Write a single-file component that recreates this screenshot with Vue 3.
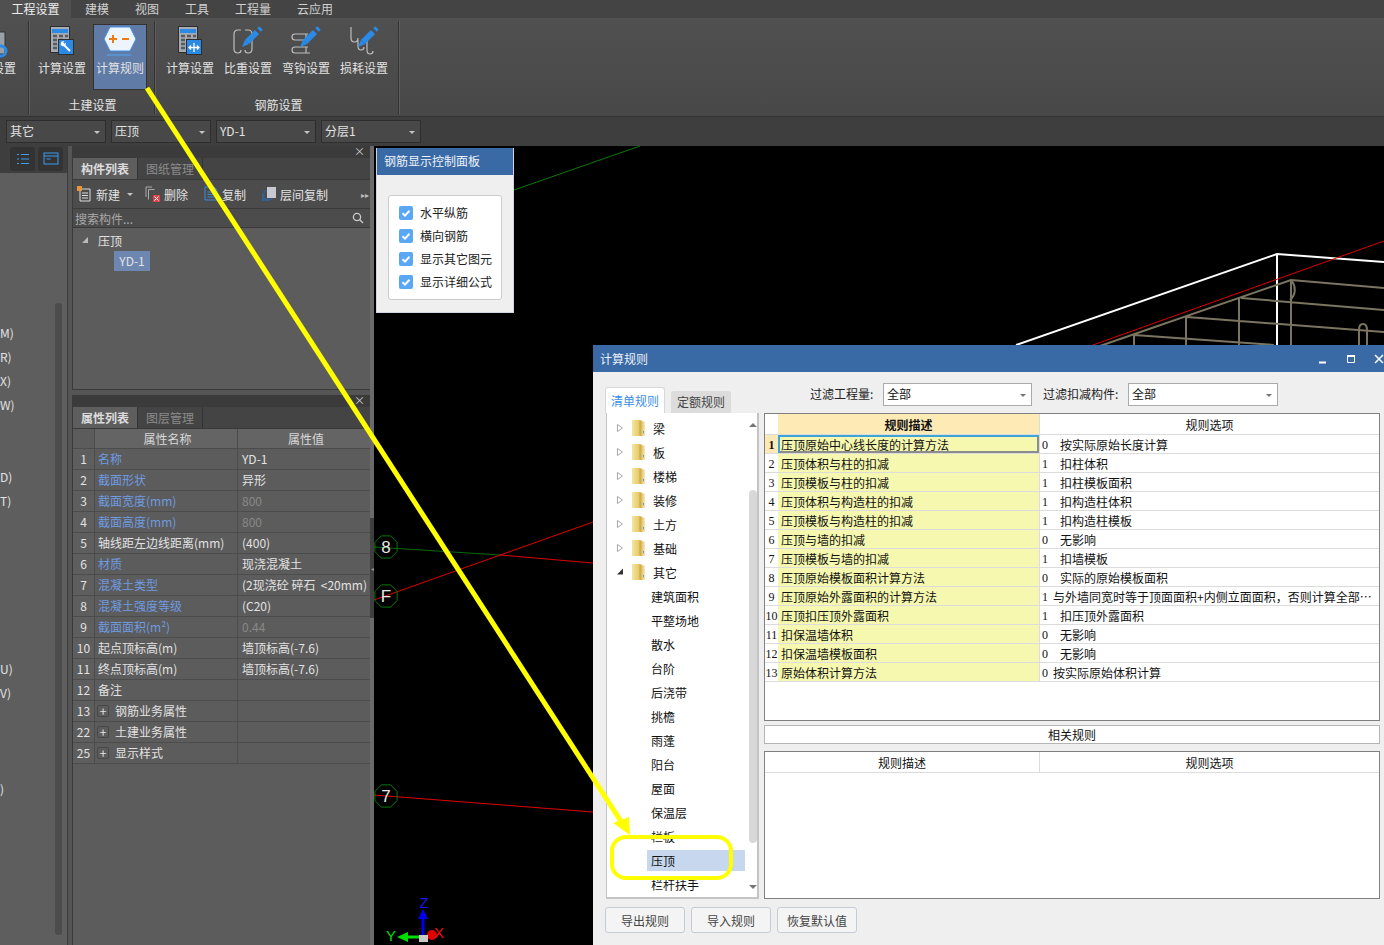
<template>
  <div class="app">
    <div class="menubar">
      <div v-for="(m, i) in menus" :key="m.t" class="menu" :class="{ on: i === 0 }" :style="{ width: m.w + 'px' }">{{ m.t }}</div>
    </div>

    <div class="ribbon">
      <div class="rgroup first">
        <svg class="cut-icon" width="10" height="34" viewBox="0 0 10 34">
          <rect x="-12" y="5" width="17" height="22" fill="#9aa0a8" stroke="#333" />
          <circle cx="1" cy="24" r="5" fill="none" stroke="#2a8ae6" stroke-width="3" />
        </svg>
        <div class="cut-text">设置</div>
      </div>
      <div class="rgroup g1">
        <div class="rbtns">
          <div v-for="b in civilBtns" :key="b.t" class="rbtn" :class="{ sel: b.sel }">
            <svg width="40" height="32" viewBox="0 0 40 32" v-html="icons[b.icon]"></svg>
            <span>{{ b.t }}</span>
          </div>
        </div>
        <div class="rlabel">土建设置</div>
      </div>
      <div class="rgroup g2">
        <div class="rbtns">
          <div v-for="b in rebarBtns" :key="b.t" class="rbtn">
            <svg width="40" height="32" viewBox="0 0 40 32" v-html="icons[b.icon]"></svg>
            <span>{{ b.t }}</span>
          </div>
        </div>
        <div class="rlabel">钢筋设置</div>
      </div>
    </div>

    <div class="selbar">
      <div v-for="s in selectors" :key="s" class="dsel">{{ s }}<i class="caret"></i></div>
    </div>

    <div class="main">
      <div class="rail">
        <div class="rail-top">
          <div class="rail-icon">
            <svg width="14" height="14" viewBox="0 0 14 14" fill="none" stroke="#3d9bf0">
              <path d="M1 2.5h2M1 7h2M1 11.5h2M5 2.5h8M5 7h8M5 11.5h8" />
            </svg>
          </div>
          <div class="rail-icon">
            <svg width="16" height="14" viewBox="0 0 16 14" fill="none" stroke="#3d9bf0">
              <rect x="1" y="1" width="14" height="11" /><path d="M1 4h14M3.5 7h4" />
            </svg>
          </div>
        </div>
        <div class="rail-body">
          <div class="rail-list">
            <div v-for="(t, i) in railRows" :key="i" class="rail-row"><span>{{ t }}</span></div>
          </div>
          <div class="rail-scroll"></div>
        </div>
      </div>

      <div class="panels">
        <section class="panel p1">
          <div class="pstrip">×</div>
          <div class="ptabs">
            <div class="ptab on">构件列表</div>
            <div class="ptab">图纸管理</div>
          </div>
          <div class="tools">
            <div class="tool t-new">
              <svg width="15" height="16" viewBox="0 0 15 16" fill="none" stroke="#ddd">
                <path d="M3 3h10v12H3zM5 7h6M5 9.500h6M5 12h6" /><rect x="0" y="0" width="5" height="5" fill="#e8963a" stroke="none" />
              </svg>
              新建<i class="caret small"></i>
            </div>
            <div class="tool t-del">
              <svg width="15" height="16" viewBox="0 0 15 16" fill="none" stroke="#aaa">
                <path d="M3.500 3.500h6M3.500 3.500v10M1 1h6M1 1v10" /><rect x="8" y="9" width="7" height="7" fill="#d9454a" stroke="none" /><path d="M9.500 10.500l4 4M13.500 10.500l-4 4" stroke="#fff" />
              </svg>
              删除
            </div>
            <div class="tool t-copy">
              <svg width="15" height="16" viewBox="0 0 15 16" fill="none" stroke="#3d86d8">
                <path d="M1 1h9l3 3v10H1zM3.500 6h7M3.500 8.500h7M3.500 11h7" />
              </svg>
              复制
            </div>
            <div class="tool t-floor">
              <svg width="15" height="16" viewBox="0 0 15 16">
                <rect x="0" y="7" width="8" height="8" fill="#35608f" /><rect x="2" y="5" width="8" height="8" fill="#4c4c4c" stroke="#35608f" /><rect x="5" y="1" width="9" height="11" fill="#c9c9d2" />
              </svg>
              层间复制
            </div>
            <div class="more">▸▸</div>
          </div>
          <div class="search">
            <span>搜索构件...</span>
            <svg width="12" height="12" viewBox="0 0 12 12" fill="none" stroke="#ccc" stroke-width="1.300">
              <circle cx="5" cy="5" r="3.600" /><path d="M7.800 7.800L11 11" />
            </svg>
          </div>
          <div class="ctree">
            <div class="cnode"><i class="tri"></i>压顶</div>
            <div class="cleaf">YD-1</div>
          </div>
        </section>

        <section class="panel p2">
          <div class="pstrip">×</div>
          <div class="ptabs">
            <div class="ptab on">属性列表</div>
            <div class="ptab">图层管理</div>
          </div>
          <div class="prow phead">
            <div class="pidx"></div>
            <div class="pname">属性名称</div>
            <div class="pval">属性值</div>
          </div>
          <div v-for="p in props" :key="p.n" class="prow">
            <div class="pidx">{{ p.n }}</div>
            <div class="pname" :class="{ link: p.link }">
              <b v-if="p.group" class="plus">+</b>{{ p.name }}
            </div>
            <div class="pval" :class="{ dim: p.dim }">{{ p.val }}</div>
          </div>
        </section>
      </div>

      <div class="splitter"><div class="grip">◂</div></div>

      <div class="canvas">
        <svg class="scene" width="1010" height="799" viewBox="374 146 1010 799" fill="none">
          <path d="M514 190L640 146" stroke="#0a7a0a" />
          <path d="M374 547L500 555" stroke="#0a6a0a" />
          <path d="M500 555L593 563M374 600L593 522M374 795L593 812" stroke="#e00000" />
          <path d="M1016 345L1277 254L1384 262M1277 254V345" stroke="#fff" stroke-width="2" />
          <path d="M1093 345L1384 241" stroke="#e00000" />
          <path d="M1097 347L1291 280L1384 288M1241 298L1384 310M1187 317L1384 332M1134 335L1274 345M1239 298V345M1186 317V345M1134 335V345M1291 280V345" stroke="#7a7460" stroke-width="2" />
          <path d="M1292 281c4 6 4 14-2 19M1359 345v-15c0-8 8-8 8 0v15" stroke="#7a7460" stroke-width="2" />
          <g v-for="a in axes" :key="a.t">
            <polygon :points="octagon(386, a.y)" stroke="#0a7a0a" />
            <text x="386" :y="a.y + 6" text-anchor="middle" class="axis-t">{{ a.t }}</text>
          </g>
          <path d="M423 935V918" stroke="#0000f0" stroke-width="3" />
          <polygon points="423,909 418,919 428,919" fill="#0000f0" />
          <path d="M419 937H407" stroke="#00e000" stroke-width="3" />
          <polygon points="397,937 408,932 408,942" fill="#00e000" />
          <circle cx="432" cy="935" r="5" fill="#e00000" />
          <rect x="419" y="935" width="9" height="7" fill="#c9c9c9" />
          <text x="424" y="908" text-anchor="middle" class="gizmo" fill="#1616f0">Z</text>
          <text x="391" y="941" text-anchor="middle" class="gizmo" fill="#00e000">Y</text>
          <text x="439" y="938" text-anchor="middle" class="gizmo" fill="#f01010">X</text>
        </svg>

        <div class="ctl">
          <div class="ctl-title">钢筋显示控制面板</div>
          <div class="ctl-body">
            <div class="ctl-box">
              <label v-for="c in checks" :key="c" class="chk">
                <svg width="14" height="14" viewBox="0 0 14 14">
                  <rect width="14" height="14" rx="2" fill="#5aa7f5" />
                  <path d="M3.500 7.200l2.500 2.400 4.500-4.800" fill="none" stroke="#fff" stroke-width="2" />
                </svg>
                <span>{{ c }}</span>
              </label>
            </div>
          </div>
        </div>

        <div class="dlg">
          <div class="dlg-title">
            <span>计算规则</span>
            <div class="winbtns">
              <svg width="10" height="10" viewBox="0 0 10 10"><path d="M1 8.500h7" stroke="#fff" stroke-width="2" /></svg>
              <svg width="10" height="10" viewBox="0 0 10 10" fill="none"><path d="M1.500 2.500h7v6h-7z" stroke="#fff" /><path d="M1 2h8" stroke="#fff" stroke-width="2" /></svg>
              <svg width="10" height="10" viewBox="0 0 10 10"><path d="M1 1l8 8M9 1l-8 8" stroke="#fff" stroke-width="1.500" /></svg>
            </div>
          </div>
          <div class="dlg-body">
            <div class="filters">
              <div class="dtabs">
                <div class="dtab on">清单规则</div>
                <div class="dtab">定额规则</div>
              </div>
              <div class="flabel l1">过滤工程量:</div>
              <div class="fsel s1">全部<i class="caret gray"></i></div>
              <div class="flabel l2">过滤扣减构件:</div>
              <div class="fsel s2">全部<i class="caret gray"></i></div>
            </div>

            <div class="content">
              <div class="tree">
                <div class="tree-list">
                  <div v-for="n in treeRoots" :key="n.t" class="tnode">
                    <svg class="ttri" width="6" height="8" viewBox="0 0 6 8">
                      <polygon v-if="!n.open" points="0.500,0.500 5.500,4 0.500,7.500" fill="#fff" stroke="#a8a8a8" />
                      <polygon v-else points="0,6.500 6,6.500 6,0.500" fill="#333" />
                    </svg>
                    <svg width="13" height="16" viewBox="0 0 13 16">
                      <defs>
                        <linearGradient id="fold" x1="0" y1="0" x2="1" y2="0">
                          <stop offset="0" stop-color="#f3e5a6" /><stop offset="0.550" stop-color="#e8c964" /><stop offset="0.650" stop-color="#d8b24a" /><stop offset="1" stop-color="#f6ecc0" />
                        </linearGradient>
                      </defs>
                      <path d="M0 0h8l5 2v14H0z" fill="url(#fold)" />
                      <path d="M8 1v14" stroke="#c9a94e" />
                      <path d="M11.500 11v2" stroke="#4f9bd8" />
                    </svg>
                    <span>{{ n.t }}</span>
                  </div>
                  <div v-for="t in treeLeaves" :key="t" class="tleaf" :class="{ sel: t === '压顶' }">
                    <span>{{ t }}</span>
                  </div>
                </div>
                <div class="tscroll">
                  <i class="up"></i>
                  <div class="thumb"></div>
                  <i class="down"></i>
                </div>
              </div>

              <div class="rcol">
                <div class="grid g-main">
                  <div class="grow ghead">
                    <div class="gi"></div>
                    <div class="gd head-d">规则描述</div>
                    <div class="go head-o">规则选项</div>
                  </div>
                  <div v-for="(r, i) in rules" :key="i" class="grow" :class="{ cur: i === 0 }">
                    <div class="gi">{{ i + 1 }}</div>
                    <div class="gd">{{ r.d }}</div>
                    <div class="go">
                      <span class="code">{{ r.c }}</span>
                      <span class="otext" :class="{ tight: r.tight }">{{ r.o }}</span>
                    </div>
                  </div>
                </div>
                <div class="related">相关规则</div>
                <div class="grid g-sub">
                  <div class="grow ghead">
                    <div class="gd2">规则描述</div>
                    <div class="go head-o">规则选项</div>
                  </div>
                </div>
              </div>
            </div>

            <div class="actions">
              <button v-for="a in actions" :key="a" class="act">{{ a }}</button>
            </div>
          </div>
        </div>
      </div>

      <svg class="mark" width="1384" height="945" viewBox="0 0 1384 945" fill="none">
        <path d="M147 88L624 826" stroke="#ffff00" stroke-width="5" />
        <polygon points="613,823 629,817 630,835" fill="#ffff00" />
        <rect x="612" y="837" width="119" height="41" rx="14" stroke="#ffff00" stroke-width="4" />
      </svg>
    </div>
  </div>
</template>

<script setup>
const menus = [
  { t: '工程设置', w: 71 },
  { t: '建模', w: 50 },
  { t: '视图', w: 50 },
  { t: '工具', w: 50 },
  { t: '工程量', w: 62 },
  { t: '云应用', w: 62 }
];

const civilBtns = [
  { t: '计算设置', icon: 'calcWrench' },
  { t: '计算规则', icon: 'hex', sel: true }
];
const rebarBtns = [
  { t: '计算设置', icon: 'calcAnchor' },
  { t: '比重设置', icon: 'hooks' },
  { t: '弯钩设置', icon: 'bend' },
  { t: '损耗设置', icon: 'loss' }
];

const calcBody = `
  <rect x="8.500" y="1.500" width="19" height="26" fill="#a7abb3" stroke="#2e2e2e"/>
  <rect x="10" y="4" width="16" height="4" fill="#2a8ae6"/>
  <path d="M11 11h4M17 11h4M23 11h3M11 15h4M17 15h4M11 19h4M11 23h4" stroke="#5a5a5a" stroke-width="2.500"/>
  <rect x="16.500" y="14.500" width="15" height="15" fill="#2a8ae6" stroke="#2e2e2e"/>`;
const pencil = `
  <path d="M19 17L29 7" stroke="#2a8ae6" stroke-width="6"/>
  <polygon points="14,22 16.900,14.900 21.100,19.100" fill="#2a8ae6"/>
  <path d="M31 5L33 3" stroke="#2a8ae6" stroke-width="5"/>`;
const wire = 'fill="none" stroke="#bdbdbd" stroke-width="1.200"';

const icons = {
  calcWrench: calcBody + '<path d="M20 18l8 8" stroke="#fff" stroke-width="2"/><path d="M18.500 19.500l1-3 3-.5-1.500 2 1 1 2-1.500-.5 3-3 1z" fill="#fff"/>',
  calcAnchor: calcBody + '<path d="M24 18v9M20 22.500h8M21 20.500l-2 2 2 2M27 20.500l2 2-2 2" stroke="#fff" fill="none" stroke-width="1.300"/>',
  hex: `<polygon points="4,14 10,2 30,2 36,14 30,26 10,26" fill="#eef4fc" stroke="#3c8fe6"/>
    <path d="M9 14h8M13 10v8M22 14h7" stroke="#ee7a12" stroke-width="2"/>
    <path d="M7 30h24" stroke="#5aa7f5"/>`,
  hooks: `<path d="M13 5h-3q-4 0-4 4v15q0 4 4 4q3 0 3-3M17 5h3q4 0 4 4v15q0 4-4 4q-3 0-3-3" ${wire}/>` + pencil,
  bend: `<path d="M22 9H9q-3 0-3 3q0 3 3 3H22M22 22H9q-3 0-3 3q0 3 3 3H24M20 9v6M20 22v6" ${wire}/>` + pencil,
  loss: `<path d="M7 2V13q0 4 3.500 4q3.500 0 3.500-4M14 15v6q0 4 3 4q3 0 3-3M23 16v9q0 4 3 4q3 0 3-3" ${wire}/>` + pencil
};

const selectors = ['其它', '压顶', 'YD-1', '分层1'];

const railRows = Array(20).fill('');
railRows[0] = 'M)';
railRows[1] = 'R)';
railRows[2] = 'X)';
railRows[3] = 'W)';
railRows[6] = 'D)';
railRows[7] = 'T)';
railRows[14] = 'U)';
railRows[15] = 'V)';
railRows[19] = ')';

const props = [
  { n: 1, name: '名称', val: 'YD-1', link: true },
  { n: 2, name: '截面形状', val: '异形', link: true },
  { n: 3, name: '截面宽度(mm)', val: '800', link: true, dim: true },
  { n: 4, name: '截面高度(mm)', val: '800', link: true, dim: true },
  { n: 5, name: '轴线距左边线距离(mm)', val: '(400)' },
  { n: 6, name: '材质', val: '现浇混凝土', link: true },
  { n: 7, name: '混凝土类型', val: '(2现浇砼 碎石\u00a0\u00a0<20mm)', link: true },
  { n: 8, name: '混凝土强度等级', val: '(C20)', link: true },
  { n: 9, name: '截面面积(m²)', val: '0.44', link: true, dim: true },
  { n: 10, name: '起点顶标高(m)', val: '墙顶标高(-7.6)' },
  { n: 11, name: '终点顶标高(m)', val: '墙顶标高(-7.6)' },
  { n: 12, name: '备注', val: '' },
  { n: 13, name: '钢筋业务属性', val: '', group: true },
  { n: 22, name: '土建业务属性', val: '', group: true },
  { n: 25, name: '显示样式', val: '', group: true }
];

const axes = [
  { t: '8', y: 547 },
  { t: 'F', y: 596 },
  { t: '7', y: 796 }
];

// 轴号圆圈其实是八边形
const octagon = (cx, cy) => {
  const pts = [];
  for (let i = 0; i < 8; i++) {
    const a = Math.PI / 8 + (i * Math.PI) / 4;
    pts.push((cx + 12 * Math.cos(a)).toFixed(1) + ',' + (cy + 12 * Math.sin(a)).toFixed(1));
  }
  return pts.join(' ');
};

const checks = ['水平纵筋', '横向钢筋', '显示其它图元', '显示详细公式'];

const treeRoots = [
  { t: '梁' },
  { t: '板' },
  { t: '楼梯' },
  { t: '装修' },
  { t: '土方' },
  { t: '基础' },
  { t: '其它', open: true }
];
const treeLeaves = ['建筑面积', '平整场地', '散水', '台阶', '后浇带', '挑檐', '雨蓬', '阳台', '屋面', '保温层', '栏板', '压顶', '栏杆扶手'];

const rules = [
  { d: '压顶原始中心线长度的计算方法', c: 0, o: '按实际原始长度计算' },
  { d: '压顶体积与柱的扣减', c: 1, o: '扣柱体积' },
  { d: '压顶模板与柱的扣减', c: 1, o: '扣柱模板面积' },
  { d: '压顶体积与构造柱的扣减', c: 1, o: '扣构造柱体积' },
  { d: '压顶模板与构造柱的扣减', c: 1, o: '扣构造柱模板' },
  { d: '压顶与墙的扣减', c: 0, o: '无影响' },
  { d: '压顶模板与墙的扣减', c: 1, o: '扣墙模板' },
  { d: '压顶原始模板面积计算方法', c: 0, o: '实际的原始模板面积' },
  { d: '压顶原始外露面积的计算方法', c: 1, o: '与外墙同宽时等于顶面面积+内侧立面面积，否则计算全部…', tight: true },
  { d: '压顶扣压顶外露面积', c: 1, o: '扣压顶外露面积' },
  { d: '扣保温墙体积', c: 0, o: '无影响' },
  { d: '扣保温墙模板面积', c: 0, o: '无影响' },
  { d: '原始体积计算方法', c: 0, o: '按实际原始体积计算', tight: true }
];

const actions = ['导出规则', '导入规则', '恢复默认值'];
</script>

<style>
html, body {
  margin: 0;
  background: #000;
}
</style>

<style scoped>
.app {
  position: relative;
  display: flex;
  flex-direction: column;
  width: 1384px;
  height: 945px;
  overflow: hidden;
  font-family: "Noto Sans CJK SC", "Noto Sans", sans-serif;
  font-size: 12px;
  color: #e2e2e2;
  background: #000;
}

.menubar {
  display: flex;
  height: 18px;
  background: #444;
  color: #d0d0d0;
  line-height: 18px;
}
.menu {
  text-align: center;
  flex: none;
}
.menu.on {
  margin-right: 1px;
  background: #505050;
  color: #eee;
}

.ribbon {
  display: flex;
  height: 99px;
  background: linear-gradient(#505050, #484848);
  border-bottom: 1px solid #333;
  box-sizing: border-box;
}
.rgroup {
  flex: none;
  border-right: 1px solid #333;
  box-shadow: 1px 0 0 #5e5e5e;
  margin: 3px 0 2px;
}
.rgroup.first {
  position: relative;
  width: 28px;
}
.cut-icon {
  display: block;
  margin-top: 6px;
}
.cut-text {
  width: 16px;
  margin-top: -1px;
  overflow: hidden;
  direction: rtl;
  white-space: nowrap;
  line-height: 16px;
}
.g1 {
  width: 126px;
  padding-left: 6px;
  box-sizing: border-box;
}
.g2 {
  width: 244px;
  padding-left: 8px;
  box-sizing: border-box;
}
.rbtns {
  display: flex;
  gap: 4px;
  margin-top: 3px;
}
.rbtn {
  display: flex;
  flex-direction: column;
  align-items: center;
  width: 54px;
  height: 66px;
  padding-top: 1px;
  box-sizing: border-box;
}
.rbtn.sel {
  background: #5f7ba6;
  outline: 1px solid #333;
  outline-offset: -1px;
}
.rbtn span {
  line-height: 16px;
  margin-top: 3px;
  white-space: nowrap;
}
.rlabel {
  padding-right: 4px;
  text-align: center;
  margin-top: 7px;
  line-height: 16px;
}

.selbar {
  display: flex;
  gap: 5px;
  align-items: center;
  height: 29px;
  padding-left: 6px;
  background: #3e3e3e;
  box-sizing: border-box;
}
.dsel {
  position: relative;
  width: 100px;
  height: 23px;
  padding-left: 3px;
  line-height: 20px;
  background: #484848;
  border: 1px solid #2e2e2e;
  box-sizing: border-box;
}
.caret {
  position: absolute;
  right: 5px;
  top: 10px;
  border: 3px solid transparent;
  border-top: 3px solid #c4c4c4;
  border-bottom: 0;
}
.caret.gray {
  border-top-color: #777;
}
.caret.small {
  position: static;
  display: inline-block;
  margin-left: 3px;
  vertical-align: middle;
}

.main {
  display: flex;
  flex: 1;
  min-height: 0;
}

.rail {
  display: flex;
  flex-direction: column;
  flex: none;
  width: 68px;
  background: #5e5e5e;
  border-right: 1px solid #3a3a3a;
  box-sizing: border-box;
}
.rail-top {
  display: flex;
  gap: 3px;
  height: 27px;
  padding: 1px 0 0 10px;
  background: #3e3e3e;
  box-sizing: border-box;
}
.rail-icon {
  display: flex;
  align-items: center;
  justify-content: center;
  width: 25px;
  height: 24px;
  background: #333;
  border-radius: 3px;
}
.rail-body {
  display: flex;
  flex: 1;
  min-height: 0;
}
.rail-list {
  width: 55px;
  padding-top: 148px;
  box-sizing: border-box;
}
.rail-row {
  height: 24px;
  line-height: 24px;
}
.rail-row span {
  display: block;
  width: 14px;
  overflow: hidden;
  white-space: nowrap;
}
.rail-scroll {
  width: 7px;
  margin: 130px 0 10px;
  background: #4c4c4c;
  border-radius: 3px;
}

.panels {
  display: flex;
  flex-direction: column;
  flex: none;
  width: 302px;
  padding-left: 4px;
  background: #555;
  box-sizing: border-box;
}
.panel {
  background: #5c5c5c;
  border-left: 1px solid #3a3a3a;
}
.p1 {
  height: 244px;
  border-bottom: 1px solid #3a3a3a;
  box-sizing: border-box;
}
.p2 {
  flex: 1;
  margin-top: 5px;
}
.pstrip {
  height: 12px;
  padding-right: 5px;
  background: #3b3b3b;
  text-align: right;
  font-size: 11px;
  line-height: 11px;
  color: #ccc;
}
.ptabs {
  display: flex;
  height: 22px;
  background: #444;
  border-bottom: 1px solid #3a3a3a;
  box-sizing: border-box;
}
.ptab {
  width: 64px;
  text-align: center;
  line-height: 21px;
  color: #8b8b8b;
  border-right: 1px solid #333;
  font-weight: 700;
}
.ptab:not(.on) {
  font-weight: 400;
}
.ptab.on {
  background: #5e5e5e;
  color: #dcdcdc;
}
.tools {
  position: relative;
  display: flex;
  align-items: center;
  height: 29px;
  background: #4c4c4c;
  border-bottom: 1px solid #3a3a3a;
  box-sizing: border-box;
}
.tool {
  display: flex;
  align-items: center;
  gap: 4px;
  flex: none;
}
.t-new { margin-left: 4px; }
.t-del { margin-left: 12px; }
.t-copy { margin-left: 16px; gap: 3px; }
.t-floor { margin-left: 16px; gap: 3px; }
.more {
  margin-left: auto;
  padding-right: 1px;
  font-size: 8px;
  color: #bbb;
}
.search {
  display: flex;
  align-items: center;
  justify-content: space-between;
  height: 19px;
  padding: 0 6px 0 2px;
  background: #4c4c4c;
  border-bottom: 1px solid #3a3a3a;
  color: #a8a8a8;
  box-sizing: border-box;
}
.ctree {
  padding-top: 3px;
}
.cnode {
  display: flex;
  align-items: center;
  height: 18px;
  padding-left: 9px;
}
.tri {
  width: 0;
  height: 0;
  margin-right: 10px;
  border-left: 6px solid transparent;
  border-bottom: 6px solid #bbb;
}
.cleaf {
  width: 36px;
  height: 20px;
  margin: 2px 0 0 41px;
  line-height: 20px;
  text-align: center;
  background: #6d87b0;
}

.prow {
  display: flex;
  height: 21px;
  line-height: 20px;
  border-bottom: 1px solid #4c4c4c;
  box-sizing: border-box;
}
.phead {
  height: 20px;
  line-height: 19px;
  background: #646464;
  color: #d8d8d8;
}
.phead .pname,
.phead .pval {
  text-align: center;
}
.phead .pidx {
  background: #5c5c5c;
}
.pidx {
  flex: none;
  width: 22px;
  text-align: center;
  border-right: 1px solid #4c4c4c;
  box-sizing: border-box;
  background: #5e5e5e;
}
.pname {
  flex: none;
  display: flex;
  align-items: center;
  width: 143px;
  padding-left: 3px;
  border-right: 1px solid #4c4c4c;
  box-sizing: border-box;
  white-space: nowrap;
}
.phead .pname {
  justify-content: center;
}
.pname.link {
  color: #6f9be0;
}
.pval {
  flex: 1;
  padding-left: 4px;
  white-space: nowrap;
  overflow: hidden;
}
.pval.dim {
  color: #888;
}
.plus {
  width: 12px;
  height: 12px;
  margin: 0 6px 0 -1px;
  line-height: 10px;
  text-align: center;
  font-weight: 400;
  border: 1px solid #474747;
  border-radius: 2px;
  box-sizing: border-box;
}

.splitter {
  display: flex;
  align-items: flex-start;
  flex: none;
  width: 4px;
  background: #6a6a6a;
}
.grip {
  display: flex;
  align-items: center;
  justify-content: center;
  width: 4px;
  height: 100px;
  margin-top: 372px;
  background: #3f3f3f;
  font-size: 6px;
  color: #999;
  overflow: hidden;
}

.canvas {
  position: relative;
  flex: 1;
  background: #000;
}
.scene {
  position: absolute;
  left: 0;
  top: 0;
}
.axis-t {
  font-family: "Liberation Sans", sans-serif;
  font-size: 17px;
  fill: #e6e6e6;
  stroke: none;
}
.gizmo {
  font-family: "Liberation Sans", sans-serif;
  font-size: 15px;
  stroke: none;
}
.ctl {
  position: absolute;
  left: 2px;
  top: 2px;
  width: 138px;
  height: 165px;
  background: #efefef;
  border: 1px solid #cfd6e2;
  border-top: 0;
  box-sizing: border-box;
  color: #222;
}
.ctl-title {
  height: 27px;
  padding-left: 7px;
  line-height: 26px;
  background: #3a6aa5;
  color: #eef3fa;
}
.ctl-body {
  padding: 20px 11px 0 11px;
}
.ctl-box {
  display: flex;
  flex-direction: column;
  gap: 5px;
  height: 105px;
  padding: 8px 0 0 10px;
  background: #fff;
  border: 1px solid #ccc;
  border-radius: 3px;
  box-sizing: border-box;
}
.chk {
  display: flex;
  align-items: center;
  gap: 7px;
  height: 18px;
  white-space: nowrap;
}
.chk span {
  padding-bottom: 1px;
}

.dlg {
  position: absolute;
  left: 219px;
  top: 199px;
  width: 800px;
  height: 610px;
  background: #efefef;
  color: #111;
}
.dlg-title {
  display: flex;
  align-items: center;
  justify-content: space-between;
  height: 27px;
  padding-left: 7px;
  background: #3a6aa5;
  color: #eaf0f8;
}
.winbtns {
  display: flex;
  gap: 18px;
  padding-right: 9px;
}
.dlg-body {
  padding-left: 12px;
}
.filters {
  display: flex;
  align-items: flex-start;
  height: 41px;
  padding-top: 11px;
  box-sizing: border-box;
}
.dtabs {
  display: flex;
  gap: 6px;
  margin-top: 4px;
  align-items: flex-end;
  height: 26px;
}
.dtab {
  width: 60px;
  height: 22px;
  line-height: 22px;
  text-align: center;
  background: #dcdcdc;
  border-radius: 3px 3px 0 0;
  color: #444;
}
.dtab.on {
  height: 26px;
  line-height: 25px;
  background: #fff;
  border: 1px solid #d8d8d8;
  border-bottom: 0;
  box-sizing: border-box;
  color: #3d8ee8;
}
.flabel {
  line-height: 21px;
  white-space: nowrap;
  color: #222;
}
.l1 { margin-left: 79px; width: 63px; }
.l2 { margin-left: 11px; width: 75px; }
.fsel {
  position: relative;
  height: 23px;
  margin-left: 10px;
  padding-left: 3px;
  line-height: 20px;
  background: #fff;
  border: 1px solid #aaa;
  box-sizing: border-box;
}
.s1 { width: 149px; }
.s2 { width: 150px; }

.content {
  display: flex;
  gap: 5px;
  margin-left: 1px;
}
.tree {
  display: flex;
  flex: none;
  width: 153px;
  height: 486px;
  background: #fff;
  border-style: solid;
  border-width: 0 2px 2px 1px;
  border-color: #c4c4c4;
  box-sizing: border-box;
  overflow: hidden;
}
.tree-list {
  flex: 1;
  padding-top: 3px;
  overflow: hidden;
}
.tnode {
  display: flex;
  align-items: center;
  height: 24px;
  padding-left: 10px;
}
.tnode span {
  margin-left: 8px;
}
.ttri {
  flex: none;
  margin-right: 9px;
}
.tleaf {
  display: flex;
  align-items: center;
  height: 24px;
  padding-left: 40px;
}
.tleaf span {
  display: block;
  flex: 1;
  height: 21px;
  padding-left: 4px;
  line-height: 21px;
}
.tleaf.sel span {
  background: #c6d7ee;
}
.tscroll {
  display: flex;
  flex-direction: column;
  align-items: center;
  flex: none;
  width: 9px;
  height: 100%;
  margin-left: 3px;
}
.up,
.down {
  flex: none;
  width: 0;
  border: 4px solid transparent;
  border-top: 0;
  border-bottom: 4px solid #777;
  margin-top: 10px;
}
.down {
  border-bottom: 0;
  border-top: 4px solid #777;
  margin: auto 0 8px;
}
.thumb {
  width: 8px;
  height: 353px;
  margin-top: 63px;
  background: #d8d8d8;
  border-radius: 4px;
}

.rcol {
  display: flex;
  flex-direction: column;
  flex: none;
  width: 616px;
  height: 486px;
}
.grid {
  background: #fff;
  border: 1px solid #808080;
  box-sizing: border-box;
}
.g-main {
  height: 308px;
}
.g-sub {
  flex: 1;
  margin-top: 7px;
}
.grow {
  display: flex;
  height: 19px;
  line-height: 20px;
  border-bottom: 1px solid #dcdcdc;
  box-sizing: border-box;
}
.ghead {
  height: 21px;
  line-height: 21px;
}
.gi {
  flex: none;
  width: 13px;
  text-align: center;
  font-family: "Liberation Serif", serif;
}
.gd {
  flex: none;
  width: 261px;
  padding-left: 3px;
  background: #f5f8ae;
  box-sizing: border-box;
  white-space: nowrap;
}
.go {
  flex: 1;
  display: flex;
  min-width: 0;
  padding-left: 2px;
  border-left: 1px solid #dcdcdc;
}
.head-d {
  background: #fdeab5;
  text-align: center;
  font-weight: 700;
  padding: 0;
}
.head-o {
  justify-content: center;
  padding: 0;
}
.gd2 {
  flex: none;
  width: 274px;
  text-align: center;
}
.code {
  flex: none;
  width: 6px;
  font-family: "Liberation Serif", serif;
}
.otext {
  margin-left: 12px;
  white-space: nowrap;
}
.otext.tight {
  margin-left: 5px;
}
.cur .gi {
  background: #fde9b5;
  font-weight: 700;
}
.cur .gd {
  box-shadow: inset 0 2px 0 #3ea4d8, inset 2px 0 0 #3ea4d8, inset -2px 0 0 #8c8c8c, inset 0 -2px 0 #8c8c8c;
}
.related {
  height: 19px;
  margin-top: 4px;
  line-height: 18px;
  text-align: center;
  background: #fff;
  border: 1px solid #b5b5b5;
  box-sizing: border-box;
}

.actions {
  display: flex;
  gap: 6px;
  margin-top: 8px;
}
.act {
  width: 80px;
  height: 26px;
  padding: 0;
  font: inherit;
  color: #444;
  background: #f4f4f4;
  border: 1px solid #c4ccd8;
  border-radius: 3px;
}

.mark {
  position: absolute;
  left: 0;
  top: 0;
  pointer-events: none;
}
</style>
